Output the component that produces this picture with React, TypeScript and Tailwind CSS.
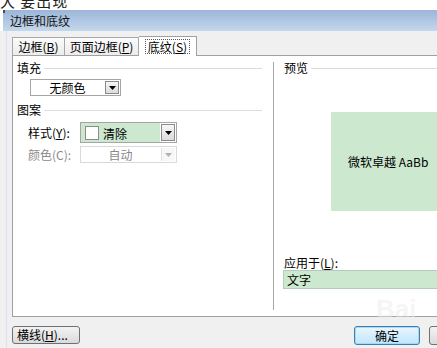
import React from 'react';

function Arrow({ disabled }: { disabled?: boolean }) {
  return (
    <div
      className={
        disabled
          ? 'w-[14px] h-full border-l border-[#e0e0e0] bg-[#f7f7f7] flex items-center justify-center shrink-0'
          : 'w-[14px] h-full border border-[#8a8a8a] bg-gradient-to-b from-[#f6f6f6] to-[#dcdcdc] flex items-center justify-center shrink-0'
      }
    >
      <svg width="7" height="4" viewBox="0 0 7 4">
        <path d="M0 0h7L3.5 4z" fill={disabled ? '#b0b0b0' : '#000'} />
      </svg>
    </div>
  );
}

function GroupLabel({ text, className }: { text: string; className: string }) {
  return (
    <div className={`flex items-center h-[16px] ${className}`}>
      <span className="leading-[16px]">{text}</span>
      <div className="flex-1 ml-[3px] h-px bg-[#dcdcdc]" />
    </div>
  );
}

export default function App() {
  return (
    <div className="w-[437px] h-[348px] overflow-hidden bg-white flex flex-col relative font-['Noto_Sans_CJK_SC',sans-serif] text-[12px] text-black">
      <div className="h-[10px] overflow-hidden shrink-0">
        <div className="text-[15px] leading-[15px] mt-[-7px] text-[#222] tracking-[1px]">大 要出现</div>
      </div>

      <div className="h-[21px] shrink-0 ml-[3px] bg-gradient-to-b from-[#9cb6d9] to-[#c4d7ec] flex items-center pl-[7px] relative">
        <div className="absolute left-0 top-0 w-[2px] h-[3px] bg-[#4a4a4a]" />
        <span className="leading-[14px] text-[#111]">边框和底纹</span>
      </div>

      <div className="flex-1 bg-[#f0f0f0] pl-[6px] flex">
        <div className="flex-1 border-l border-[#d6e2ef] pl-[5px] flex flex-col min-w-0">
          {/* tabs */}
          <div className="h-[24px] shrink-0 flex items-end">
            <div className="w-[53px] h-[18px] border border-b-0 border-[#a8a8a8] bg-gradient-to-b from-[#fbfbfb] to-[#ececec] flex items-center justify-center leading-[14px]">
              边框(<u>B</u>)
            </div>
            <div className="w-[74px] h-[18px] border border-l-0 border-b-0 border-[#a8a8a8] bg-gradient-to-b from-[#fbfbfb] to-[#ececec] flex items-center justify-center leading-[14px]">
              页面边框(<u>P</u>)
            </div>
            <div className="w-[58px] h-[20px] mb-[-1px] border border-l-0 border-b-0 border-[#a0a0a0] bg-white flex items-center justify-center relative z-10">
              <span className="border border-dotted border-[#555] px-[2px] leading-[13px]">
                底纹(<u>S</u>)
              </span>
            </div>
          </div>

          {/* panel */}
          <div className="h-[262px] shrink-0 bg-white border border-r-0 border-[#a0a0a0] flex overflow-hidden">
            <div className="w-[260px] shrink-0 pt-[4px] pl-[4px] pr-[11px] flex flex-col">
              <GroupLabel text="填充" className="" />
              <div className="mt-[3px] ml-[13px] w-[91px] h-[17px] border border-[#a5a5a5] bg-white flex items-stretch">
                <div className="flex-1 flex items-center justify-center leading-[14px]">无颜色</div>
                <div className="p-px">
                  <Arrow />
                </div>
              </div>

              <GroupLabel text="图案" className="mt-[6px]" />

              <div className="mt-[4px] flex items-center h-[21px]">
                <div className="ml-[11px] w-[52px] leading-[14px]">
                  样式(<u>Y</u>):
                </div>
                <div className="w-[97px] h-[21px] border border-[#a5a5a5] bg-[#cce8cf] flex items-stretch">
                  <div className="flex-1 flex items-center">
                    <div className="ml-[4px] w-[14px] h-[14px] border border-[#8c8c8c] bg-white" />
                    <span className="ml-[4px] leading-[14px] mt-[2px]">清除</span>
                  </div>
                  <div className="p-px bg-white">
                    <Arrow />
                  </div>
                </div>
              </div>

              <div className="mt-[3px] flex items-center h-[17px]">
                <div className="ml-[11px] w-[52px] leading-[14px] text-[#8a8a8a]">颜色(C):</div>
                <div className="w-[97px] h-[17px] border border-[#d9d9d9] bg-white flex items-stretch">
                  <div className="flex-1 flex items-center justify-center leading-[14px] text-[#8a8a8a]">自动</div>
                  <div className="p-px">
                    <Arrow disabled />
                  </div>
                </div>
              </div>
            </div>

            <div className="my-[6px] w-[2px] shrink-0 border-l border-[#a8a8a8] border-r border-r-white" />

            <div className="flex-1 pt-[4px] flex flex-col min-w-0">
              <GroupLabel text="预览" className="pl-[9px]" />
              <div className="mt-[36px] ml-[56px] w-[150px] h-[99px] shrink-0 bg-[#cce8cf] flex items-center pl-[17px]">
                <span className="leading-[14px] whitespace-nowrap">微软卓越 AaBb</span>
              </div>
              <div className="mt-[45px] h-[14px] pl-[9px] leading-[14px]">
                应用于(<u>L</u>):
              </div>
              <div className="ml-[8px] h-[19px] border border-r-0 border-[#b9c9b9] bg-[#cce8cf] flex items-center pl-[3px]">
                <span className="leading-[14px]">文字</span>
              </div>
            </div>
          </div>

          {/* buttons */}
          <div className="flex-1 flex items-start pt-[9px] overflow-hidden">
            <div className="w-[68px] h-[18px] shrink-0 rounded-[3px] border border-[#707070] bg-gradient-to-b from-[#f3f3f3] to-[#dadada] flex items-center pl-[4px] leading-[14px]">
              横线(<u>H</u>)...
            </div>
            <div className="ml-[274px] w-[66px] h-[19px] shrink-0 rounded-[3px] border border-[#3c7fb1] bg-gradient-to-b from-[#eaf6fd] to-[#bee6fd] flex items-center justify-center leading-[14px] shadow-[inset_0_0_0_1px_#a8d8f4]">
              确定
            </div>
            <div className="ml-[9px] w-[66px] h-[19px] shrink-0 rounded-[3px] border border-[#707070] bg-gradient-to-b from-[#f3f3f3] to-[#dadada]" />
          </div>
        </div>
      </div>

      <div className="absolute left-[376px] top-[296px] text-[26px] leading-[26px] font-bold text-[#ececec]/50 font-['Liberation_Sans',sans-serif] pointer-events-none">
        Bai
      </div>
    </div>
  );
}
